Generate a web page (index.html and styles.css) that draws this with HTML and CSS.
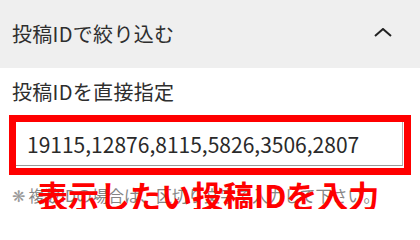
FILE: index.html
```html
<!DOCTYPE html>
<html lang="ja">
<head>
<meta charset="utf-8">
<link rel="stylesheet" href="styles.css">
</head>
<body>
<div class="panel">
  <div class="panel-head">
    <span class="panel-title">投稿IDで絞り込む</span>
    <svg class="chevron" width="18" height="9" viewBox="0 0 18 9"><path d="M1 8 L9 1 L17 8" fill="none" stroke="#222" stroke-width="2"/></svg>
  </div>
  <div class="panel-body">
    <div class="field-label">投稿IDを直接指定</div>
    <div class="highlight">
      <input class="id-input" type="text" value="19115,12876,8115,5826,3506,2807">
    </div>
    <div class="note">
      <span class="note-icon">❋</span><span class="note-text">複数IDの場合は、区切り文字で入力して下さい。</span>
      <span class="annotation">表示したい投稿IDを入力</span>
    </div>
  </div>
</div>
</body>
</html>
```
FILE: styles.css
```css
html, body {
  margin: 0;
  padding: 0;
  background: #fff;
}
body {
  font-family: "Noto Sans CJK JP", "Noto Sans", sans-serif;
  color: #333;
}
.panel-head {
  height: 68px;
  background: #efefef;
  display: flex;
  align-items: center;
  justify-content: space-between;
  padding: 0 28px 0 12px;
}
.panel-title {
  font-size: 20px;
  letter-spacing: 0.3px;
  color: #2e2e2e;
  line-height: 30px;
}
.chevron {
  display: block;
  margin-top: -4px;
}
.panel-body {
  padding: 9px 9px 0 9px;
}
.field-label {
  font-size: 20px;
  letter-spacing: 0.3px;
  line-height: 30px;
  padding-left: 3px;
  color: #2e2e2e;
}
.highlight {
  margin-top: 8px;
  border: 7px solid #ff0000;
  background: #fff;
  padding: 0 1px 2px 0;
}
.id-input {
  display: block;
  box-sizing: border-box;
  width: 100%;
  height: 44px;
  margin: 0;
  border: 0;
  border-right: 1px solid #b4b4b4;
  border-bottom: 1px solid #9a9a9a;
  padding: 0 0 0 11px;
  font-family: "Noto Sans CJK JP", "Noto Sans", sans-serif;
  font-size: 21px;
  color: #2a2a2a;
  background: #fff;
  outline: none;
}
.note {
  position: relative;
  margin-top: 8px;
  padding-left: 3px;
  font-size: 16px;
  line-height: 24px;
  color: #858585;
  white-space: nowrap;
}
.note-icon {
  font-family: "DejaVu Sans", sans-serif;
  font-size: 16px;
  color: #9a9a9a;
  margin-right: 3px;
  vertical-align: 0;
}
.annotation {
  position: absolute;
  left: 28px;
  top: -6px;
  font-size: 31px;
  font-weight: bold;
  line-height: 36px;
  color: #ff0000;
}
```
